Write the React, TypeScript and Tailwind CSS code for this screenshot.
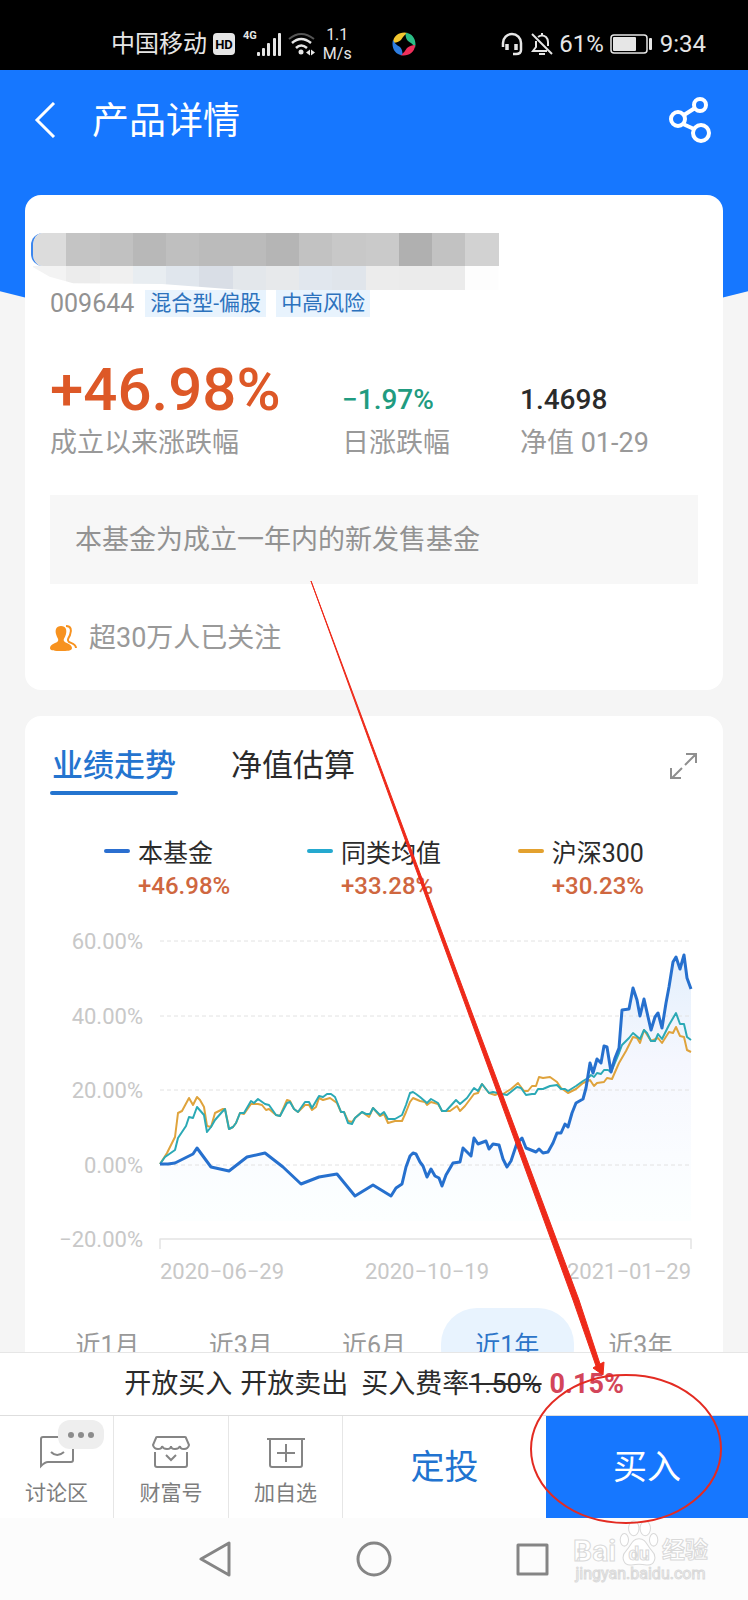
import React, { useState } from "react";

// Constants
const MOSAIC_TOP = [
  "bg-[#dcdcdc]", "bg-[#c4c4c4]", "bg-[#c1c1c1]", "bg-[#b8b8b8]", "bg-[#bfbfbf]",
  "bg-[#bbbbbb]", "bg-[#bbbbbb]", "bg-[#b5b5b5]", "bg-[#c2c2c2]", "bg-[#c8c8c8]",
  "bg-[#cacaca]", "bg-[#b0b0b0]", "bg-[#c2c2c2]", "bg-[#d2d2d2]",
];

const MOSAIC_BOTTOM = [
  "bg-[#f3f3f3]", "bg-[#ececec]", "bg-[#f0f0f0]", "bg-[#e8edf1]", "bg-[#e0e6ed]",
  "bg-[#d9dee6]", "bg-[#e3e7eb]", "bg-[#e7e9eb]", "bg-[#e1e7ee]", "bg-[#e0e5eb]",
  "bg-[#ececec]", "bg-[#ebebeb]", "bg-[#ebebeb]", "bg-[#fdfdfd]",
];

const LEGEND = [
  { name: "本基金", value: "+46.98%", color: "bg-[#2b6fd0]" },
  { name: "同类均值", value: "+33.28%", color: "bg-[#25a9cf]" },
  { name: "沪深300", value: "+30.23%", color: "bg-[#e3a12f]" },
];

const PERIODS = ["近1月", "近3月", "近6月", "近1年", "近3年"];

const GRID = [
  { label: "60.00%", y: 0 },
  { label: "40.00%", y: 75 },
  { label: "20.00%", y: 149 },
  { label: "0.00%", y: 224 },
  { label: "−20.00%", y: 298 },
];

const FUND =
  "0,223 8,223 15,222 33,213 37,207 51,226 69,230 87,216 105,212 123,226 141,243 159,236 177,233 195,255 213,244 231,255 236,247 242,243 246,226 250,215 253,212 256,213 260,221 263,225 267,236 271,228 275,235 279,237 282,245 286,234 293,222 300,221 303,207 311,215 314,197 318,203 326,200 329,208 333,203 339,204 343,218 347,226 351,220 357,202 362,197 366,207 376,211 379,208 383,212 388,211 393,202 397,192 401,192 405,183 408,186 412,172 416,162 423,158 426,147 430,122 433,132 437,118 441,122 444,105 447,106 451,131 455,117 459,107 462,69 469,68 473,47 477,59 480,75 484,58 491,89 495,76 498,72 502,87 506,62 509,46 513,21 516,16 520,28 524,14 527,37 531,48";

const AVERAGE =
  "0,223 5,216 15,209 18,197 26,185 29,176 33,177 37,166 44,174 47,191 51,186 55,179 62,171 65,168 69,188 73,186 76,182 80,172 84,172 91,160 94,162 98,158 105,163 109,164 116,174 120,175 127,162 130,161 134,168 138,171 145,161 149,161 152,167 159,155 163,156 167,153 171,153 175,156 181,171 184,171 188,182 192,183 195,177 202,171 206,173 210,173 213,167 220,174 224,171 228,178 235,178 242,174 246,164 250,152 253,151 256,153 260,156 267,162 271,158 278,162 282,170 286,170 296,159 300,163 307,157 314,147 318,150 322,143 329,152 333,151 347,154 357,146 361,147 366,154 372,153 375,153 378,148 383,148 390,145 397,144 401,148 405,148 408,150 416,145 423,140 428,137 431,134 434,136 437,132 441,133 444,129 448,129 451,131 459,112 462,104 469,97 473,92 480,98 484,89 487,92 491,100 495,100 498,93 502,98 509,84 516,72 520,83 524,83 527,96 531,99";

const CSI300 =
  "0,223 7,212 15,196 18,172 22,170 29,157 33,164 37,156 40,159 44,166 47,185 51,186 55,172 63,168 65,168 69,188 73,186 76,182 80,172 84,173 91,163 98,163 102,164 106,169 109,168 116,174 120,175 127,159 130,160 134,168 138,171 145,164 149,164 152,169 156,166 159,157 163,159 170,157 177,162 181,171 184,171 188,180 192,181 195,177 202,171 209,176 213,167 220,175 224,173 228,182 235,180 242,180 246,171 250,161 253,157 260,160 265,161 267,164 271,161 278,163 282,170 290,170 297,165 300,170 305,165 314,153 318,152 322,143 329,152 335,154 340,152 343,153 351,148 358,142 364,150 368,150 372,145 376,145 379,136 383,137 390,136 397,141 401,147 408,152 416,148 423,142 430,139 434,145 437,142 444,141 447,137 452,138 459,122 466,110 473,96 477,97 480,102 484,89 491,100 498,97 502,102 509,91 513,92 516,86 520,95 524,96 527,109 531,111";

const StatusBar = () => (
  <div className="flex h-[70px] shrink-0 items-center bg-black pt-[18px] pr-[42px] pl-[111px] text-2xl text-[#e6e6e6]">
    <span>中国移动</span>
    <span className="ml-[6px] flex h-[22px] w-[22px] items-center justify-center rounded-[4px] bg-[#e6e6e6] text-[13px] leading-none font-bold text-black">
      HD
    </span>
    <span className="ml-2 self-start text-[11px] leading-9 font-bold">4G</span>
    <svg className="h-6 w-[25px]" viewBox="0 0 25 24" fill="#e6e6e6">
      <rect x="0" y="20" width="3" height="4" rx="1" />
      <rect x="5" y="16" width="3" height="8" rx="1" />
      <rect x="10" y="11" width="3" height="13" rx="1" />
      <rect x="16" y="6" width="3" height="18" rx="1" />
      <rect x="21" y="1" width="3" height="23" rx="1" />
    </svg>
    <svg className="ml-[6px] h-6 w-7" viewBox="0 0 28 24" fill="none" strokeWidth="2.5">
      <path d="M1 7 Q13 -3 26 7" stroke="#555" strokeWidth="2" />
      <path d="M4 11 Q13 3 23 11" stroke="#e6e6e6" />
      <path d="M8 16 Q13 11 19 16" stroke="#e6e6e6" />
      <circle cx="13" cy="20" r="2.5" fill="#e6e6e6" />
      <path d="M18 20.500 l4 -3 v6 z M27 20.500 l-4 -3 v6 z" fill="#e6e6e6" />
    </svg>
    <span className="ml-[7px] text-center text-base leading-[19px]">
      1.1
      <br />
      M/s
    </span>
    <svg className="ml-10 h-6 w-6" viewBox="0 0 24 24">
      <path d="M1 11 C1 3 9 -1 16 1 C12 3 11 5 9 8 C7 10 3 11 1 11z" fill="#f2c62f" />
      <path d="M14 1 C21 1 25 9 23 16 C21 12 19 11 16 9 C14 7 13 3 14 1z" fill="#2bbd86" />
      <path d="M23 13 C23 21 15 25 8 23 C12 21 13 19 15 16 C17 14 21 13 23 13z" fill="#ef2f5b" />
      <path d="M10 23 C3 23 -1 15 1 8 C3 12 5 13 8 15 C10 17 11 21 10 23z" fill="#2d7de0" />
    </svg>
    <div className="ml-auto flex items-center">
      <svg className="h-6 w-[22px]" viewBox="0 0 22 24" fill="none" stroke="#e6e6e6" strokeWidth="2.500">
        <path d="M2 15 V11 A9 9 0 0 1 20 11 V18 Q20 22 15 22 H12" />
        <path d="M6 12 v6 M15 12 v6" strokeWidth="3.500" />
      </svg>
      <svg className="ml-2 h-6 w-[22px]" viewBox="0 0 22 24" fill="none" stroke="#e6e6e6" strokeWidth="2">
        <path d="M1 2 L21 22" />
        <path d="M5 9 V15 L2 19 H16" />
        <path d="M7 5 Q11 2 15 5 Q17 7 17 10 V14" />
        <path d="M11 1 v3" />
        <path d="M8 22 h6" />
      </svg>
      <span className="ml-[6px]">61%</span>
      <svg className="ml-[6px] h-5 w-11" viewBox="0 0 44 20" fill="none">
        <rect x="1" y="1" width="36" height="18" rx="3" stroke="#e6e6e6" strokeWidth="1.500" />
        <rect x="3" y="3" width="23" height="14" rx="1" fill="#e6e6e6" />
        <rect x="39" y="4" width="3" height="12" rx="1" fill="#e6e6e6" />
      </svg>
      <span className="ml-[6px]">9:34</span>
    </div>
  </div>
);

const Header = () => (
  <header className="h-[266px] bg-[#1677ff] [clip-path:ellipse(90%_100%_at_50%_0)]">
    <div className="flex h-[100px] items-center pr-[37px] pl-[34px] text-white">
      <button type="button" aria-label="返回">
        <svg className="h-9 w-[22px]" viewBox="0 0 22 36" fill="none" stroke="currentColor" strokeWidth="3">
          <path d="M20 1 L3 18 L20 35" />
        </svg>
      </button>
      <h1 className="ml-9 pt-1 text-[37px] leading-[48px]">产品详情</h1>
      <button type="button" aria-label="分享" className="ml-auto">
        <svg className="h-12 w-[42px]" viewBox="0 0 42 48" fill="none" stroke="currentColor" strokeWidth="4">
          <circle cx="9" cy="23" r="7" />
          <circle cx="31" cy="9" r="6" />
          <circle cx="32" cy="37" r="8" />
          <path d="M15 19 L26 12 M14 28 L25 33" />
        </svg>
      </button>
    </div>
  </header>
);

const FundCard = () => (
  <section className="relative -mt-[141px] rounded-2xl bg-white pt-[38px] pb-[34px]">
    <div className="ml-[6px] w-[67%]">
      <div className="grid h-[33px] grid-cols-14 overflow-hidden rounded-l-xl border-l-2 border-[#3b86ee]">
        {MOSAIC_TOP.map((color, i) => (
          <span key={i} className={color} />
        ))}
      </div>
      <div className="grid h-6 grid-cols-14 pl-[2px] [clip-path:polygon(0_0,100%_0,100%_100%,45%_100%,28%_75%,9%_72%,4%_45%)]">
        {MOSAIC_BOTTOM.map((color, i) => (
          <span key={i} className={color} />
        ))}
      </div>
    </div>

    <div className="px-[25px]">
      <div className="flex h-[27px] items-center text-[21px] leading-[27px] text-[#2c72bd]">
        <span className="mr-[11px] text-[25px] text-[#929292]">009644</span>
        <span className="mr-[10px] bg-[#e8f3fd] px-[5px]">混合型-偏股</span>
        <span className="bg-[#e8f3fd] px-[5px]">中高风险</span>
      </div>

      <dl className="mt-[43px] grid grid-cols-[292fr_178fr_178fr] items-end">
        <div className="flex flex-col-reverse">
          <dt className="mt-[5px] text-[27px] leading-9 text-[#999]">成立以来涨跌幅</dt>
          <dd className="text-[60px] leading-[60px] font-medium text-[#dd5827]">+46.98%</dd>
        </div>
        <div className="flex flex-col-reverse">
          <dt className="mt-[5px] text-[27px] leading-9 text-[#999]">日涨跌幅</dt>
          <dd className="text-[28px] leading-10 font-medium text-[#219b80]">−1.97%</dd>
        </div>
        <div className="flex flex-col-reverse">
          <dt className="mt-[5px] text-[27px] leading-9 text-[#999]">净值 01-29</dt>
          <dd className="text-[28px] leading-10 font-medium text-[#2b2b2b]">1.4698</dd>
        </div>
      </dl>

      <p className="mt-[34px] bg-[#f7f7f7] px-[25px] pt-[27px] pb-[26px] text-[27px] leading-9 text-[#929292]">
        本基金为成立一年内的新发售基金
      </p>

      <p className="mt-9 flex items-center gap-[11px] text-[27px] leading-9 text-[#999]">
        <svg className="h-7 w-7" viewBox="0 0 28 28" fill="#f7921f">
          <path d="M11 2 C6 2 5 6 6 10 C7 14 9 15 8 17 C7 19 0 20 0 24 C0 27 5 27 11 27 C17 27 22 27 22 24 C22 20 15 19 14 17 C13 15 15 14 16 10 C17 6 16 2 11 2z" />
          <path
            d="M16 2 C21 2 22 6 20 11 C18 15 17 16 19 18 C21 19 26 20 26 24"
            fill="none"
            stroke="#f7921f"
            strokeWidth="2"
          />
        </svg>
        超30万人已关注
      </p>
    </div>
  </section>
);

const TrendChart = () => (
  <svg
    className="mt-[18px] w-full text-[22px]"
    viewBox="0 0 648 368"
    fill="none"
    strokeLinejoin="round"
    role="img"
    aria-label="业绩走势"
  >
    <defs>
      <linearGradient id="area" x1="0" y1="0" x2="0" y2="1">
        <stop offset="0" stopColor="#e3effc" />
        <stop offset="0.4" stopColor="#f5f7fe" />
        <stop offset="0.75" stopColor="#fafcff" />
        <stop offset="1" stopColor="#fcffff" />
      </linearGradient>
    </defs>
    <g transform="translate(110 21)">
      <polygon points={`${FUND} 531,280 0,280`} fill="url(#area)" />
      {GRID.map(({ label, y }) => (
        <g key={label}>
          <text x="-17" y={y + 8} textAnchor="end" fill="#c8c8c8">
            {label}
          </text>
          {y < 298 && <path d={`M0 ${y} H531`} stroke="#e2e2e2" strokeDasharray="4 3" />}
        </g>
      ))}
      <path d="M0 308 V298 H531 V308" stroke="#e4e4e4" strokeWidth="1.500" />
      <polyline points={CSI300} stroke="#dfa33c" strokeWidth="2" />
      <polyline points={AVERAGE} stroke="#2ba9b5" strokeWidth="2" />
      <polyline points={FUND} stroke="#2670ce" strokeWidth="3" />
      <g fill="#c8c8c8">
        <text x="0" y="338">2020−06−29</text>
        <text x="267" y="338" textAnchor="middle">2020−10−19</text>
        <text x="531" y="338" textAnchor="end">2021−01−29</text>
      </g>
    </g>
  </svg>
);

const TrendCard = () => {
  const [tab, setTab] = useState("业绩走势");
  const [period, setPeriod] = useState("近1年");

  return (
    <section className="mt-[26px] rounded-2xl bg-white px-[25px] pt-[30px]">
      <div className="flex items-start">
        {["业绩走势", "净值估算"].map((name) => (
          <button
            key={name}
            type="button"
            onClick={() => setTab(name)}
            className={
              tab === name
                ? "mr-[51px] text-[31px] leading-10 font-medium text-[#2474cf]"
                : "mr-[51px] text-[31px] leading-10 text-[#2b2b2b]"
            }
          >
            <span className="px-[2px]">{name}</span>
            <span
              className={
                tab === name
                  ? "mt-[5px] block h-1 rounded-full bg-[#2474cf]"
                  : "mt-[5px] block h-1"
              }
            />
          </button>
        ))}
        <button type="button" aria-label="全屏" className="mt-[6px] ml-auto">
          <svg className="h-7 w-7" viewBox="0 0 28 28" fill="none" stroke="#8f8f8f" strokeWidth="2">
            <path d="M15 13 L25 3 M16 2 H26 V11 M12 16 L2 26 M1 16 V26 H11" />
          </svg>
        </button>
      </div>

      <ul className="mt-[42px] flex justify-between px-[54px] leading-[33px]">
        {LEGEND.map(({ name, value, color }) => (
          <li key={name} className="flex">
            <span className={`mt-3 mr-2 h-1 w-[26px] rounded-full ${color}`} />
            <div>
              <p className="text-[25px] text-[#2b2b2b]">{name}</p>
              <p className="text-2xl font-medium text-[#cf673f]">{value}</p>
            </div>
          </li>
        ))}
      </ul>

      <TrendChart />

      <div className="-mx-[9px] mt-5 grid grid-cols-5">
        {PERIODS.map((name) => (
          <button
            key={name}
            type="button"
            onClick={() => setPeriod(name)}
            className={
              period === name
                ? "h-[76px] rounded-[36px] bg-[#e8f3fe] text-[25px] text-[#2c74c8]"
                : "h-[76px] text-[25px] text-[#999]"
            }
          >
            {name}
          </button>
        ))}
      </div>
    </section>
  );
};

const ActionBar = () => (
  <div className="grid h-[103px] shrink-0 grid-cols-[114fr_115fr_114fr_203fr_202fr] border-t border-[#dedede] bg-white text-[21px] leading-[30px] text-[#7d7d7d]">
    <button type="button" className="flex flex-col items-center gap-2 border-r border-[#e6e6e6] pt-[18px]">
      <span className="relative">
        <svg className="h-9 w-9" viewBox="0 0 36 36" fill="none" stroke="#858585" strokeWidth="2">
          <path d="M2 32 V5 Q2 3 4 3 H32 Q34 3 34 5 V26 Q34 28 32 28 H9 Q6 28 2 32z" />
          <path d="M12 18 Q18 24 25 18" />
        </svg>
        <span className="absolute -top-[14px] left-[19px] flex h-[29px] w-[46px] items-center justify-center gap-1 rounded-[12px] bg-[#eeeeee]">
          <span className="h-[6px] w-[6px] rounded-full bg-[#8c8c8c]" />
          <span className="h-[6px] w-[6px] rounded-full bg-[#8c8c8c]" />
          <span className="h-[6px] w-[6px] rounded-full bg-[#8c8c8c]" />
        </span>
      </span>
      讨论区
    </button>
    <button type="button" className="flex flex-col items-center gap-2 border-r border-[#e6e6e6] pt-[18px]">
      <svg className="h-9 w-[38px]" viewBox="0 0 38 36" fill="none" stroke="#858585" strokeWidth="2">
        <path d="M5 3 H33 Q34 3 34 4 L37 11 Q36 15 32 15 Q28 15 28 12 Q27 15 23 15 Q19 15 19 12 Q19 15 15 15 Q11 15 10 12 Q10 15 6 15 Q2 15 1 11 L4 4 Q4 3 5 3z" />
        <path d="M3 18 V31 Q3 33 5 33 H33 Q35 33 35 31 V18" />
        <path d="M14 21 L19 26 L24 21" />
      </svg>
      财富号
    </button>
    <button type="button" className="flex flex-col items-center gap-2 border-r border-[#e6e6e6] pt-[18px]">
      <svg className="h-9 w-[38px]" viewBox="0 0 38 36" fill="none" stroke="#858585" strokeWidth="2">
        <path d="M0 5 H38 M3 5 V31 Q3 33 5 33 H33 Q35 33 35 31 V5" />
        <path d="M19 10 V28 M10 19 H28" />
      </svg>
      加自选
    </button>
    <button type="button" className="text-[34px] text-[#2173d0]">
      定投
    </button>
    <button type="button" className="bg-[#1677ff] text-[34px] text-white">
      买入
    </button>
  </div>
);

const Watermark = () => (
  <div className="absolute top-[2px] right-[40px] w-[135px] text-white [-webkit-text-stroke:1px_#d9d9d9]">
    <div className="flex items-end justify-between">
      <span className="text-[30px] leading-[30px] font-bold">Bai</span>
      <svg className="h-[46px] w-10" viewBox="0 0 38 44" fill="#fff" stroke="#d9d9d9">
        <ellipse cx="5" cy="19" rx="4" ry="6" />
        <ellipse cx="14" cy="8" rx="5" ry="7" />
        <ellipse cx="25" cy="8" rx="5" ry="7" />
        <ellipse cx="33" cy="19" rx="4" ry="6" />
        <path d="M19 18 C26 18 26 24 31 29 C37 35 34 44 26 43 C21 42 17 42 12 43 C4 44 1 35 7 29 C12 24 12 18 19 18z" />
        <text x="19" y="38" textAnchor="middle" fontSize="18" fontWeight="700" strokeWidth="1">
          du
        </text>
      </svg>
      <span className="text-[23px] leading-[30px] font-bold">经验</span>
    </div>
    <p className="text-center text-base leading-4">jingyan.baidu.com</p>
  </div>
);

const SystemNav = () => (
  <nav className="relative flex h-[82px] shrink-0 items-center justify-center gap-[122px] bg-[#fcfcfc]">
    <button type="button" aria-label="返回键">
      <svg className="h-9 w-9" viewBox="0 0 36 36" fill="none" stroke="#858585" strokeWidth="3" strokeLinejoin="round">
        <path d="M31 2 V34 L3 18z" />
      </svg>
    </button>
    <button type="button" aria-label="主屏幕">
      <svg className="h-9 w-9" viewBox="0 0 36 36" fill="none" stroke="#858585" strokeWidth="3">
        <circle cx="18" cy="18" r="16" />
      </svg>
    </button>
    <button type="button" aria-label="最近任务">
      <svg className="h-9 w-9" viewBox="0 0 36 36" fill="none" stroke="#858585" strokeWidth="3" strokeLinejoin="round">
        <rect x="4" y="4" width="29" height="29" />
      </svg>
    </button>
    <Watermark />
  </nav>
);

// Hand drawn hint that points at the buy button
const Annotation = () => (
  <svg className="pointer-events-none absolute bottom-0 left-0 w-full" viewBox="0 0 748 1600" fill="none">
    <path
      d="M311 581 L433 908 L579 1300 L600 1364 L604 1362 L603 1375 L593 1368 L596 1366 L573 1300 L430 908z"
      fill="#ee2a1a"
      stroke="#ee2a1a"
      strokeWidth="1"
    />
    <ellipse cx="626" cy="1449" rx="95" ry="74" stroke="#e32b22" strokeWidth="2" />
  </svg>
);

const App = () => {
  return (
    <div className="relative flex h-screen flex-col bg-[#f5f5f5] font-[Roboto,'Noto_Sans_CJK_SC',sans-serif]">
      <StatusBar />

      <main className="min-h-0 flex-1 overflow-y-auto [scrollbar-width:none]">
        <Header />
        <div className="px-[25px]">
          <FundCard />
          <TrendCard />
        </div>
      </main>

      <p className="flex h-[63px] shrink-0 items-center justify-center border-t border-[#e6e6e6] bg-white text-[27px] leading-9 text-[#2b2b2b]">
        <span>开放买入</span>
        <span className="ml-2">开放卖出</span>
        <span className="ml-[13px]">买入费率</span>
        <s>1.50%</s>
        <strong className="ml-2 font-bold text-[#d3455a]">0.15%</strong>
      </p>

      <ActionBar />
      <SystemNav />
      <Annotation />
    </div>
  );
};

export default App;
